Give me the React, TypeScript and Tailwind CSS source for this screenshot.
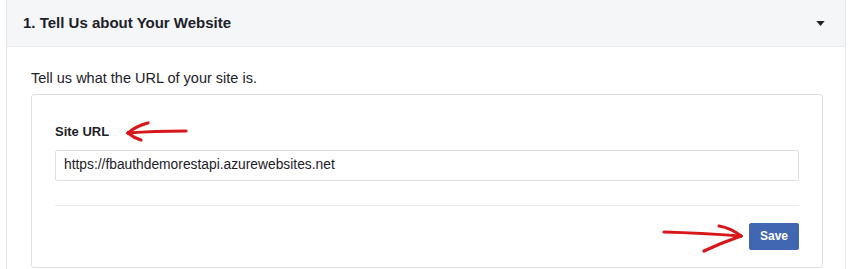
import React from "react";

function Caret() {
  return (
    <svg width="9" height="5" viewBox="0 0 10 6" className="block">
      <path d="M0 0 L10 0 L5 6 Z" fill="#1d2129" />
    </svg>
  );
}

function ArrowLeft() {
  return (
    <svg width="70" height="24" viewBox="0 0 70 24" className="block">
      <g stroke="#d8171b" strokeWidth="3.2" strokeLinecap="round" fill="none">
        <path d="M4 13 Q30 11 62 11" />
        <path d="M4 13 Q12 6 24 3" />
        <path d="M4 13 Q10 18 17 20" />
      </g>
    </svg>
  );
}

function ArrowRight() {
  return (
    <svg width="86" height="34" viewBox="0 0 86 34" className="block">
      <g stroke="#d8171b" strokeWidth="3.2" strokeLinecap="round" fill="none">
        <path d="M3 13 Q40 14 80 17" />
        <path d="M80 17 Q70 9 58 7" />
        <path d="M80 17 Q60 24 43 32" />
      </g>
    </svg>
  );
}

export default function App() {
  return (
    <div
      className="h-[269px] w-[850px] overflow-hidden bg-white pl-[6px] pr-[4px] text-[#1d2129]"
      style={{ fontFamily: '"Liberation Sans", Arial, sans-serif' }}
    >
      <div className="-mt-px border border-[#e5e6e9] bg-white">
        <div className="flex h-[47px] items-center justify-between border-b border-[#e9ebee] bg-[#f5f6f7] pl-[16px] pr-[20px]">
          <h2 className="text-[15px] font-bold">1. Tell Us about Your Website</h2>
          <Caret />
        </div>
        <div className="pl-[24px] pr-[22px] pt-[22px] pb-[20px]">
          <p className="text-[14.5px] leading-[18px]">Tell us what the URL of your site is.</p>
          <div className="mt-[7px] rounded-[3px] border border-[#dddfe2] px-[23px] pb-[14px] pt-[25px]">
            <div className="flex items-center gap-[15px]">
              <label className="text-[13px] font-bold">Site URL</label>
              <ArrowLeft />
            </div>
            <div className="mt-[6px] flex h-[31px] items-center rounded-[2px] border border-[#dddfe2] px-[8px] text-[13.8px]">
              https://fbauthdemorestapi.azurewebsites.net
            </div>
            <div className="mt-[24px] border-t border-[#e9ebee]" />
            <div className="mt-[13px] flex items-center justify-end gap-[2px]">
              <ArrowRight />
              <button className="h-[27px] w-[50px] rounded-[2px] border border-[#4267b2] bg-[#4267b2] text-[12px] font-bold text-white">
                Save
              </button>
            </div>
          </div>
        </div>
      </div>
    </div>
  );
}
